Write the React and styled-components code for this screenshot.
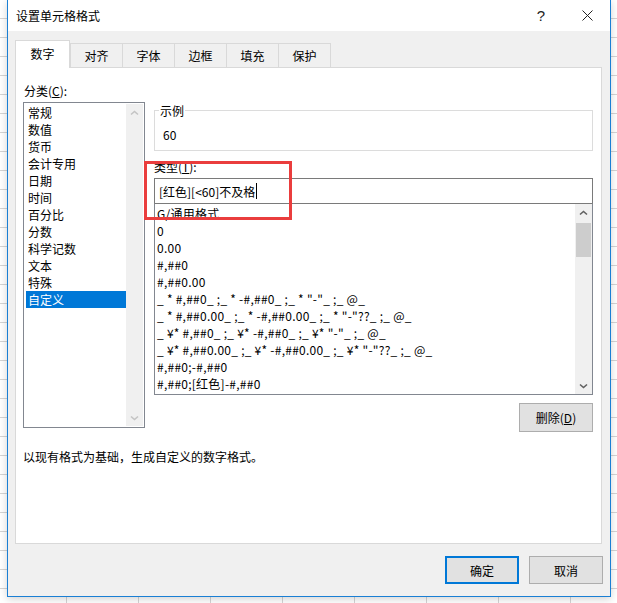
import styled, { createGlobalStyle } from "styled-components";

const GlobalStyle = createGlobalStyle`
  html, body {
    margin: 0;
    padding: 0;
  }
  body {
    width: 617px;
    height: 603px;
    overflow: hidden;
    font-family: "Noto Sans CJK SC", "Microsoft YaHei", sans-serif;
    font-size: 12px;
    color: #000;
    background-color: #fff;
    background-image:
      repeating-linear-gradient(to bottom, transparent 0 18px, #d4d4d4 18px 19px),
      repeating-linear-gradient(to right, transparent 0 66px, #d4d4d4 66px 67px, transparent 67px 72px);
  }
`;

const categories = [
  "常规",
  "数值",
  "货币",
  "会计专用",
  "日期",
  "时间",
  "百分比",
  "分数",
  "科学记数",
  "文本",
  "特殊",
  "自定义",
];

const formats = [
  "G/通用格式",
  "0",
  "0.00",
  "#,##0",
  "#,##0.00",
  '_ * #,##0_ ;_ * -#,##0_ ;_ * "-"_ ;_ @_',
  '_ * #,##0.00_ ;_ * -#,##0.00_ ;_ * "-"??_ ;_ @_',
  '_ ¥* #,##0_ ;_ ¥* -#,##0_ ;_ ¥* "-"_ ;_ @_',
  '_ ¥* #,##0.00_ ;_ ¥* -#,##0.00_ ;_ ¥* "-"??_ ;_ @_',
  "#,##0;-#,##0",
  "#,##0;[红色]-#,##0",
];

const tabs = ["数字", "对齐", "字体", "边框", "填充", "保护"];

const Chevron = ({ down, disabled }) => (
  <svg width="9" height="6" viewBox="0 0 9 6">
    <path
      d={down ? "M1 1.5 L4.5 4.5 L8 1.5" : "M1 4.5 L4.5 1.5 L8 4.5"}
      fill="none"
      stroke={disabled ? "#c4c4c4" : "#606060"}
      strokeWidth="1.6"
    />
  </svg>
);

const ScrollBar = ({ disabled, thumb }) => (
  <StyledScroll>
    <ArrowCell>
      <Chevron disabled={disabled} />
    </ArrowCell>
    <Track>{thumb && <Thumb />}</Track>
    <ArrowCell>
      <Chevron down disabled={disabled} />
    </ArrowCell>
  </StyledScroll>
);

const App = () => {
  return (
    <>
      <GlobalStyle />
      <Dialog>
        <TitleBar>
          <Title>设置单元格格式</Title>
          <CaptionButton>?</CaptionButton>
          <CaptionButton>
            <svg width="11" height="11" viewBox="0 0 11 11">
              <path d="M0.5 0.5 L10.5 10.5 M10.5 0.5 L0.5 10.5" stroke="#222" strokeWidth="1" />
            </svg>
          </CaptionButton>
        </TitleBar>

        <Body>
          <TabStrip>
            {tabs.map((t, i) => (
              <Tab key={t} $active={i === 0}>
                {t}
              </Tab>
            ))}
          </TabStrip>

          <Panel>
            <Columns>
              <LeftColumn>
                <FieldLabel>
                  分类(<u>C</u>):
                </FieldLabel>
                <CategoryBox>
                  <CategoryItems>
                    {categories.map(c => (
                      <CategoryItem key={c} $selected={c === "自定义"}>
                        {c}
                      </CategoryItem>
                    ))}
                  </CategoryItems>
                  <ScrollBar disabled />
                </CategoryBox>
              </LeftColumn>

              <RightColumn>
                <SampleGroup>
                  <legend>示例</legend>
                  <SampleValue>60</SampleValue>
                </SampleGroup>

                <TypeLabel>
                  类型(<u>T</u>):
                </TypeLabel>
                <TypeInput>
                  [红色][&lt;60]不及格
                  <Caret />
                </TypeInput>
                <FormatBox>
                  <FormatItems>
                    {formats.map(f => (
                      <FormatItem key={f}>{f}</FormatItem>
                    ))}
                  </FormatItems>
                  <ScrollBar thumb />
                </FormatBox>
                <ButtonRow>
                  <DialogButton $w={74} $h={29}>
                    删除(<u>D</u>)
                  </DialogButton>
                </ButtonRow>
              </RightColumn>

              <Highlight />
            </Columns>

            <Description>以现有格式为基础，生成自定义的数字格式。</Description>
          </Panel>

          <Footer>
            <DialogButton $primary $w={74} $h={28}>
              确定
            </DialogButton>
            <DialogButton $w={74} $h={28}>
              取消
            </DialogButton>
          </Footer>
        </Body>
      </Dialog>
    </>
  );
};

export default App;

const Dialog = styled.div`
  box-sizing: border-box;
  margin-left: 7px;
  width: 604px;
  height: 597px;
  border: 1px solid #1a7fd4;
  border-top: none;
  background: #f0f0f0;
  box-shadow: 0 2px 8px rgba(0, 0, 0, 0.18);
  display: flex;
  flex-direction: column;
`;

const TitleBar = styled.div`
  height: 31px;
  flex-shrink: 0;
  background: #fff;
  display: flex;
  align-items: center;
  padding-left: 8px;
`;

const Title = styled.div`
  flex: 1;
  font-size: 12px;
  line-height: 17px;
`;

const CaptionButton = styled.div`
  width: 46px;
  height: 31px;
  display: flex;
  align-items: center;
  justify-content: center;
  font-family: "Liberation Sans", Arial, sans-serif;
  font-size: 15px;
  color: #222;
`;

const Body = styled.div`
  flex: 1;
  padding: 9px 7px 0 7px;
  display: flex;
  flex-direction: column;
`;

const TabStrip = styled.div`
  display: flex;
  align-items: flex-end;
  height: 27px;
  position: relative;
  z-index: 1;
`;

const Tab = styled.div`
  box-sizing: border-box;
  width: ${p => (p.$active ? 55 : 53)}px;
  height: ${p => (p.$active ? 28 : 24)}px;
  margin-bottom: ${p => (p.$active ? -1 : 0)}px;
  margin-left: ${p => (p.$active ? 0 : -1)}px;
  border: 1px solid #d9d9d9;
  border-bottom: none;
  background: ${p => (p.$active ? "#fff" : "#f0f0f0")};
  display: flex;
  align-items: center;
  justify-content: center;
  padding-bottom: ${p => (p.$active ? 2 : 0)}px;
  line-height: 17px;

  &:nth-child(2) {
    margin-left: 0;
  }
`;

const Panel = styled.div`
  box-sizing: border-box;
  width: 587px;
  height: 477px;
  background: #fff;
  border: 1px solid #d9d9d9;
  padding: 14px 7px 0 7px;
  display: flex;
  flex-direction: column;
`;

const Columns = styled.div`
  display: flex;
  gap: 9px;
  position: relative;
`;

const LeftColumn = styled.div`
  width: 122px;
  display: flex;
  flex-direction: column;
`;

const FieldLabel = styled.div`
  line-height: 17px;
  margin-bottom: 3px;
  padding-left: 1px;
`;

const CategoryBox = styled.div`
  box-sizing: border-box;
  width: 122px;
  height: 326px;
  border: 1px solid #828790;
  display: flex;
  padding: 1px;
`;

const CategoryItems = styled.div`
  flex: 1;
  padding-left: 1px;
`;

const CategoryItem = styled.div`
  line-height: 17px;
  height: 17px;
  padding-left: 2px;
  background: ${p => (p.$selected ? "#0078d7" : "transparent")};
  color: ${p => (p.$selected ? "#fff" : "#000")};
`;

const StyledScroll = styled.div`
  width: 17px;
  background: #f0f0f0;
  display: flex;
  flex-direction: column;
`;

const ArrowCell = styled.div`
  height: 17px;
  display: flex;
  align-items: center;
  justify-content: center;
`;

const Track = styled.div`
  flex: 1;
  padding: 2px 0 0 0;
  display: flex;
  justify-content: center;
`;

const Thumb = styled.div`
  width: 15px;
  height: 34px;
  background: #cdcdcd;
`;

const RightColumn = styled.div`
  width: 439px;
  display: flex;
  flex-direction: column;
  padding-top: 20px;
`;

const SampleGroup = styled.fieldset`
  box-sizing: border-box;
  margin: 0;
  height: 49px;
  border: 1px solid #dcdcdc;
  padding: 0 0 0 4px;

  legend {
    padding: 0 1px;
    line-height: 17px;
  }
`;

const SampleValue = styled.div`
  line-height: 17px;
  padding: 7px 0 0 4px;
`;

const TypeLabel = styled.div`
  line-height: 17px;
  margin-top: 7px;
  margin-bottom: 3px;
`;

const TypeInput = styled.div`
  box-sizing: border-box;
  height: 26px;
  border: 1px solid #7a7a7a;
  padding: 0 4px;
  display: flex;
  align-items: center;
  line-height: 17px;
  white-space: pre;
`;

const Caret = styled.span`
  display: inline-block;
  width: 1px;
  height: 16px;
  background: #000;
  margin-left: 1px;
`;

const FormatBox = styled.div`
  box-sizing: border-box;
  height: 192px;
  margin-top: -1px;
  border: 1px solid #828790;
  border-top-color: #7a7a7a;
  display: flex;
`;

const FormatItems = styled.div`
  flex: 1;
  padding: 1px 0 0 2px;
  overflow: hidden;
`;

const FormatItem = styled.div`
  line-height: 17px;
  height: 17px;
  white-space: pre;
  letter-spacing: 0.25px;
`;

const ButtonRow = styled.div`
  display: flex;
  justify-content: flex-end;
  margin-top: 8px;
`;

const DialogButton = styled.div`
  box-sizing: border-box;
  width: ${p => p.$w}px;
  height: ${p => p.$h}px;
  background: #e1e1e1;
  border: ${p => (p.$primary ? "2px solid #0078d7" : "1px solid #adadad")};
  display: flex;
  align-items: center;
  justify-content: center;
  line-height: 17px;
`;

const Highlight = styled.div`
  position: absolute;
  left: 121px;
  top: 79px;
  width: 148px;
  height: 59px;
  box-sizing: border-box;
  border: 3px solid #ea3d3d;
  pointer-events: none;
`;

const Description = styled.div`
  line-height: 17px;
  margin-top: 16px;
`;

const Footer = styled.div`
  display: flex;
  justify-content: flex-end;
  gap: 10px;
  margin-top: 12px;
`;
